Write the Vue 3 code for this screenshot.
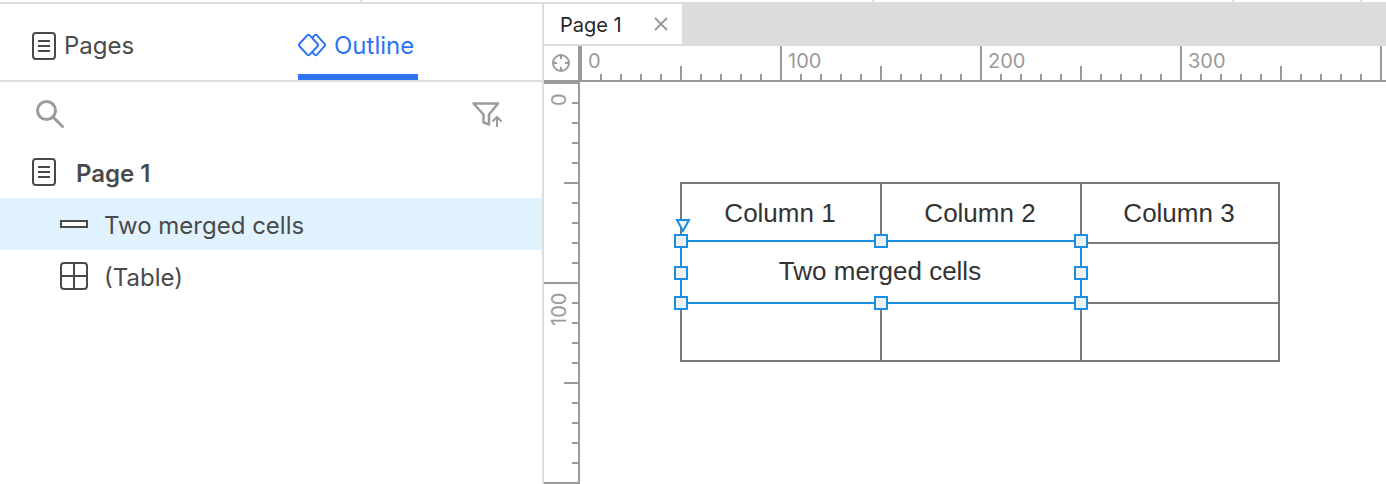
<script setup>
import { computed, onMounted, onUnmounted, ref } from 'vue'

const size = ref({ width: window.innerWidth, height: window.innerHeight })
const measure = () => {
  size.value = { width: window.innerWidth, height: window.innerHeight }
}
onMounted(() => window.addEventListener('resize', measure))
onUnmounted(() => window.removeEventListener('resize', measure))

const scale = (length) =>
  Array.from({ length: Math.max(1, Math.floor((length + 140) / 200)) }, (_, i) => i * 100)
const acrossMarks = computed(() => scale(size.value.width - 580))
const downMarks = computed(() => scale(size.value.height - 82))

const cuts = [360, 872, 1232, 1360]
const handles = ['nw', 'n', 'ne', 'w', 'e', 'sw', 's', 'se']
</script>

<template>
  <div class="app">
    <div class="toolbar-edge">
      <i v-for="x in cuts" :key="x" :style="{ left: x + 'px' }"></i>
    </div>
    <div class="workspace">
      <aside class="panel">
        <nav class="panel-tabs">
          <button type="button" class="panel-tab">
            <svg width="24" height="28" viewBox="0 0 24 28" class="icon">
              <rect x="1" y="1" width="22" height="26" rx="3" />
              <path d="M6 9h12M6 14h12M6 19h12" />
            </svg>
            <span>Pages</span>
          </button>
          <button type="button" class="panel-tab active">
            <svg width="28" height="24" viewBox="0 0 28 24" class="icon">
              <path d="M9.300 1.400 1.500 9.800a1.700 1.700 0 0 0 0 2.400l7.800 8.400a1.700 1.700 0 0 0 2.400 0l7.800-8.400a1.700 1.700 0 0 0 0-2.400l-7.800-8.400a1.700 1.700 0 0 0-2.400 0Z" />
              <path d="M14 4l2.600-2.600a1.700 1.700 0 0 1 2.400 0l7.500 8.400a1.700 1.700 0 0 1 0 2.400l-7.500 8.400a1.700 1.700 0 0 1-2.400 0L14 18" />
            </svg>
            <span>Outline</span>
          </button>
        </nav>
        <div class="panel-tools">
          <button type="button" aria-label="Search">
            <svg width="30" height="30" viewBox="0 0 30 30" class="icon">
              <circle cx="10.500" cy="11.500" r="9" stroke-width="3" />
              <path d="M17 18 26.500 27.500" stroke-width="3" stroke-linecap="round" />
            </svg>
          </button>
          <button type="button" aria-label="Filter">
            <svg width="30" height="26" viewBox="0 0 30 26" class="icon">
              <path d="M1.500 2.500H26L17 13.500V23.500L11.500 21.500V13.500Z" stroke-width="2.500" stroke-linejoin="round" />
              <path d="M25 26V16.500M20.500 20.500 25 16l4.500 4.500" />
            </svg>
          </button>
        </div>
        <ul class="tree">
          <li class="row root">
            <svg width="24" height="28" viewBox="0 0 24 28" class="icon">
              <rect x="1" y="1" width="22" height="26" rx="3" />
              <path d="M6 9h12M6 14h12M6 19h12" />
            </svg>
            <span>Page 1</span>
          </li>
          <li class="row child selected">
            <svg width="28" height="28" viewBox="0 0 28 28" class="icon">
              <rect x="1" y="11" width="26" height="6" fill="#fff" />
            </svg>
            <span>Two merged cells</span>
          </li>
          <li class="row child">
            <svg width="28" height="28" viewBox="0 0 28 28" class="icon">
              <rect x="1" y="1" width="26" height="26" rx="3" />
              <path d="M14 1v26M1 14h26" />
            </svg>
            <span>(Table)</span>
          </li>
        </ul>
      </aside>

      <main class="editor">
        <div class="doc-tabs">
          <div class="doc-tab">
            <span>Page 1</span>
            <button type="button" aria-label="Close Page 1">
              <svg width="14" height="14" viewBox="0 0 14 14" class="icon">
                <path d="M1 1l12 12M13 1 1 13" />
              </svg>
            </button>
          </div>
        </div>
        <div class="stage">
          <div class="corner">
            <svg width="18" height="18" viewBox="0 0 18 18" class="icon">
              <circle cx="9" cy="9" r="8" />
              <path d="M9 1v4M9 13v4M1 9h4M13 9h4" />
            </svg>
          </div>
          <div class="ruler across">
            <span v-for="m in acrossMarks" :key="m">{{ m }}</span>
          </div>
          <div class="ruler down">
            <span v-for="m in downMarks" :key="m">{{ m }}</span>
          </div>
          <div class="canvas">
            <table>
              <colgroup><col class="wide" /><col class="wide" /><col /></colgroup>
              <thead>
                <tr>
                  <th scope="col">Column 1</th>
                  <th scope="col">Column 2</th>
                  <th scope="col">Column 3</th>
                </tr>
              </thead>
              <tbody>
                <tr>
                  <td colspan="2" class="merged">
                    Two merged cells
                    <div class="selection">
                      <i v-for="h in handles" :key="h" :class="['handle', h]"></i>
                      <svg class="pin" width="16" height="16" viewBox="0 0 16 16">
                        <path d="M2 2H14L8 13Z" />
                      </svg>
                    </div>
                  </td>
                  <td></td>
                </tr>
                <tr class="last">
                  <td></td>
                  <td></td>
                  <td></td>
                </tr>
              </tbody>
            </table>
          </div>
        </div>
      </main>
    </div>
  </div>
</template>

<style>
body {
  margin: 0;
}
</style>

<style scoped>
.app {
  display: flex;
  flex-direction: column;
  height: 100vh;
  overflow: hidden;
  background: #fff;
  color: #4a4a4a;
  font: 24px/32px Inter, "Liberation Sans", sans-serif;
}
* {
  box-sizing: border-box;
}
button {
  display: flex;
  align-items: center;
  padding: 0;
  border: 0;
  background: none;
  color: inherit;
  font: inherit;
}
.icon {
  display: block;
  flex: none;
  fill: none;
  stroke: currentColor;
  stroke-width: 2;
}
.toolbar-edge {
  position: relative;
  flex: none;
  height: 4px;
  border-bottom: 2px solid #ddd;
}
.toolbar-edge i {
  position: absolute;
  top: 0;
  width: 2px;
  height: 2px;
  background: #ddd;
}
.workspace {
  display: flex;
  flex: 1;
  min-height: 0;
}
.panel {
  flex: none;
  width: 544px;
  border-right: 2px solid #ddd;
}
.panel-tabs {
  display: grid;
  grid-template-columns: 1fr 1fr;
  gap: 54px;
  height: 78px;
  padding: 0 32px;
  border-bottom: 2px solid #ddd;
}
.panel-tab {
  justify-self: start;
  gap: 8px;
  padding-top: 8px;
  border-bottom: 0 solid #2e73f3;
}
.panel-tab.active {
  width: 120px;
  padding-top: 14px;
  border-bottom-width: 6px;
  color: #2e73f3;
}
.panel-tools {
  display: flex;
  align-items: center;
  justify-content: space-between;
  height: 64px;
  padding: 0 40px 0 36px;
  color: #9b9b9b;
}
.tree {
  margin: 0;
  padding: 0;
  list-style: none;
}
.row {
  display: flex;
  align-items: center;
  height: 52px;
}
.row span {
  padding-top: 4px;
}
.root {
  gap: 20px;
  padding-left: 32px;
  font-weight: 600;
}
.child {
  gap: 16px;
  padding-left: 60px;
}
.selected {
  background: #e0f2fe;
}
.editor {
  display: flex;
  flex: 1;
  flex-direction: column;
  min-width: 0;
}
.doc-tabs {
  display: flex;
  flex: none;
  height: 42px;
  border-bottom: 2px solid #ddd;
  background: #ddd;
}
.doc-tab {
  display: flex;
  align-items: center;
  justify-content: space-between;
  width: 138px;
  padding: 0 14px 0 16px;
  background: #fff;
  color: #262626;
  font-size: 20px;
}
.doc-tab span {
  padding-top: 2px;
}
.doc-tab button {
  color: #9b9b9b;
}
.stage {
  display: grid;
  flex: 1;
  grid-template-columns: 36px minmax(0, 1fr);
  grid-template-rows: 36px minmax(0, 1fr);
  min-height: 0;
  color: #9b9b9b;
}
.corner {
  display: grid;
  place-items: center;
  border: solid #9b9b9b;
  border-width: 0 2px 2px 0;
}
.ruler {
  display: flex;
  overflow: hidden;
  font-size: 20px;
  line-height: 24px;
}
.across {
  border-bottom: 2px solid #9b9b9b;
  background:
    linear-gradient(90deg, #9b9b9b 2px, transparent 2px) 0 100% / 20px 6px repeat-x,
    linear-gradient(90deg, #9b9b9b 2px, transparent 2px) 0 100% / 100px 14px repeat-x,
    linear-gradient(90deg, #9b9b9b 2px, transparent 2px) 0 0 / 200px 100% repeat-x;
}
.across span {
  flex: 0 0 200px;
  padding: 3px 0 0 8px;
}
.down {
  flex-direction: column;
  border-right: 2px solid #9b9b9b;
  background:
    linear-gradient(#9b9b9b 2px, transparent 2px) 100% 0 / 6px 20px repeat-y,
    linear-gradient(#9b9b9b 2px, transparent 2px) 100% 0 / 14px 100px repeat-y,
    linear-gradient(#9b9b9b 2px, transparent 2px) 0 0 / 100% 200px repeat-y;
}
.down span {
  flex: 0 0 200px;
  width: 30px;
  padding-right: 3px;
  padding-bottom: 11px;
  text-align: right;
  writing-mode: vertical-rl;
  transform: rotate(180deg);
}
.canvas {
  overflow: hidden;
  padding: 100px;
}
table {
  width: 600px;
  border: solid #797979;
  border-width: 0 2px 2px 0;
  border-spacing: 0;
  table-layout: fixed;
  color: #333;
  font: 26px/30px "Liberation Sans", Arial, sans-serif;
}
.wide {
  width: 200px;
}
th,
td {
  height: 60px;
  padding: 0 2px 0 0;
  border: solid #797979;
  border-width: 2px 0 0 2px;
  font-weight: 400;
  text-align: center;
}
.last td {
  height: 58px;
}
.merged {
  position: relative;
  padding-bottom: 4px;
  border-top-color: #fff;
}
.selection {
  position: absolute;
  inset: -4px -2px -2px;
  border: 2px solid #1990df;
}
.handle {
  position: absolute;
  top: calc(50% - 6px);
  left: calc(50% - 7px);
  width: 14px;
  height: 14px;
  border: 2px solid #1990df;
  background: #f2f2f2;
}
.nw,
.n,
.ne {
  top: -8px;
}
.sw,
.s,
.se {
  top: auto;
  bottom: -8px;
}
.nw,
.w,
.sw {
  left: -8px;
}
.ne,
.e,
.se {
  right: -8px;
  left: auto;
}
.pin {
  position: absolute;
  top: -24px;
  left: -7px;
  fill: #f2f2f2;
  stroke: #1990df;
  stroke-width: 2;
}
</style>
